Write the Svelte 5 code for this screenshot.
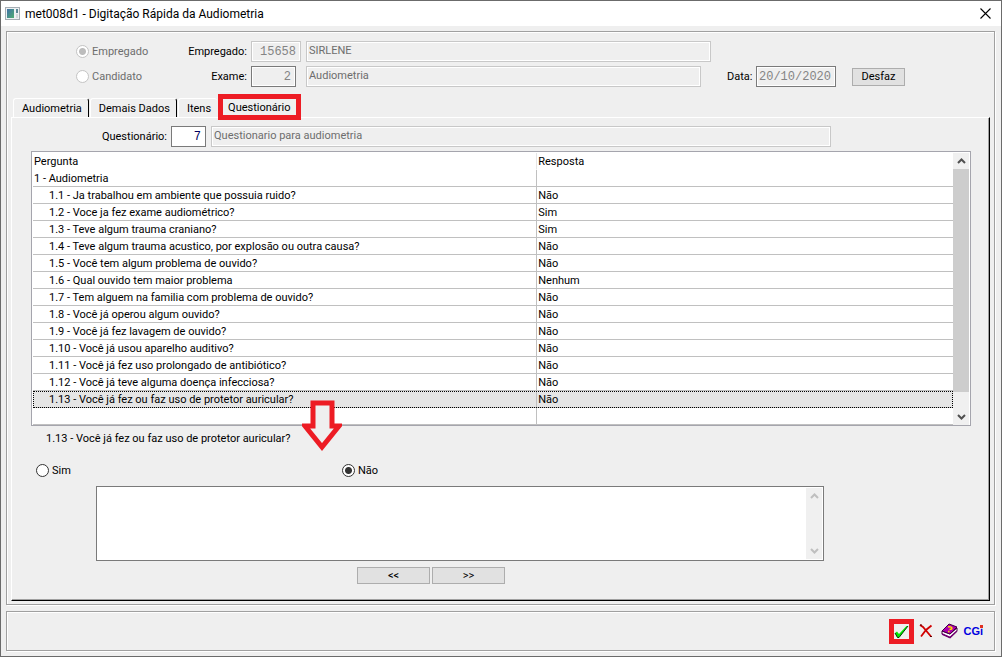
<script>
  const tabs = ["Audiometria", "Demais Dados", "Itens", "Questionário"];
  let activeTab = "Questionário";

  let questions = [
    { text: "1 - Audiometria", answer: "", group: true },
    { text: "1.1 - Ja trabalhou em ambiente que possuia ruido?", answer: "Não" },
    { text: "1.2 - Voce ja fez exame audiométrico?", answer: "Sim" },
    { text: "1.3 - Teve algum trauma craniano?", answer: "Sim" },
    { text: "1.4 - Teve algum trauma acustico, por explosão ou outra causa?", answer: "Não" },
    { text: "1.5 - Você tem algum problema de ouvido?", answer: "Não" },
    { text: "1.6 - Qual ouvido tem maior problema", answer: "Nenhum" },
    { text: "1.7 - Tem alguem na familia com problema de ouvido?", answer: "Não" },
    { text: "1.8 - Você já operou algum ouvido?", answer: "Não" },
    { text: "1.9 - Você já fez lavagem de ouvido?", answer: "Não" },
    { text: "1.10 - Você já usou aparelho auditivo?", answer: "Não" },
    { text: "1.11 - Você já fez uso prolongado de antibiótico?", answer: "Não" },
    { text: "1.12 - Você já teve alguma doença infecciosa?", answer: "Não" },
    { text: "1.13 - Você já fez ou faz uso de protetor auricular?", answer: "Não" },
  ];
  let selected = 13;

  function move(step) {
    selected = Math.min(questions.length - 1, Math.max(1, selected + step));
  }
</script>

<div class="window">
  <header class="titlebar">
    <svg class="app-icon" width="15" height="13" viewBox="0 0 15 13" aria-hidden="true">
      <defs>
        <linearGradient id="pane" x1="0" y1="0" x2="1" y2="1">
          <stop offset="0" stop-color="#3f6fa8" />
          <stop offset="1" stop-color="#4fae72" />
        </linearGradient>
      </defs>
      <rect x="0.5" y="0.5" width="14" height="12" fill="#eef1f3" stroke="#a5adb3" />
      <rect x="2" y="2" width="7" height="9" fill="url(#pane)" />
      <rect x="11" y="2" width="2" height="4" fill="#5c8796" />
      <rect x="11" y="7" width="2" height="4" fill="#d5dadd" />
    </svg>
    <h1>met008d1 - Digitação Rápida da Audiometria</h1>
    <button class="close" aria-label="Fechar">
      <svg width="11" height="11" viewBox="0 0 11 11"><path d="M0.5 0.5L10.5 10.5M10.5 0.5L0.5 10.5" stroke="#000" stroke-width="1.1" /></svg>
    </button>
  </header>

  <main class="groove content">
    <div class="person">
      <div class="row">
        <label class="kind"><input type="radio" name="kind" checked disabled />Empregado</label>
        <label class="caption" for="employee">Empregado:</label>
        <input id="employee" class="code number" value="15658" disabled />
        <input class="name name-employee" aria-label="Nome do empregado" value="SIRLENE" disabled />
      </div>
      <div class="row">
        <label class="kind"><input type="radio" name="kind" disabled />Candidato</label>
        <label class="caption" for="exam">Exame:</label>
        <input id="exam" class="code code-short number strong" value="2" disabled />
        <input class="name" aria-label="Nome do exame" value="Audiometria" disabled />
        <label class="date-caption" for="date">Data:</label>
        <input id="date" class="date strong" value="20/10/2020" disabled />
        <button class="push undo">Desfaz</button>
      </div>
    </div>

    <div class="tabs" role="tablist">
      {#each tabs as tab}
        <button role="tab" class="tab" class:active={tab === activeTab} aria-selected={tab === activeTab} on:click={() => (activeTab = tab)}>{tab}</button>
      {/each}
    </div>

    <section class="page" role="tabpanel">
      <div class="row quiz">
        <label class="quiz-caption" for="quiz">Questionário:</label>
        <input id="quiz" class="quiz-code number strong" value="7" />
        <input class="name name-quiz" aria-label="Nome do questionário" value="Questionario para audiometria" disabled />
      </div>

      <div class="list">
        <table>
          <thead>
            <tr><th class="question">Pergunta</th><th>Resposta</th></tr>
          </thead>
          <tbody>
            {#each questions as question, i}
              <tr class:selected={i === selected} on:click={() => (selected = i)}>
                <td class:indent={!question.group}>{question.text}</td>
                <td>{question.answer}</td>
              </tr>
            {/each}
            <tr><td></td><td></td></tr>
          </tbody>
        </table>
        <div class="scrollbar">
          <button aria-label="Rolar para cima"><svg width="9" height="6" viewBox="0 0 9 6"><path d="M1 5L4.500 1.500L8 5" /></svg></button>
          <div class="thumb"></div>
          <button aria-label="Rolar para baixo"><svg width="9" height="6" viewBox="0 0 9 6"><path d="M1 1L4.500 4.500L8 1" /></svg></button>
        </div>
      </div>

      <div class="answer">
        <p>{questions[selected].text}</p>
        <svg class="arrow" width="40" height="51" viewBox="0 0 40 51" aria-hidden="true">
          <path d="M11 3H30V26H37L20 47L3 26H11Z" fill="#efefef" stroke="#ed1c24" stroke-width="5" />
        </svg>
        <div class="options">
          <label><input type="radio" name="answer" value="Sim" bind:group={questions[selected].answer} />Sim</label>
          <label><input type="radio" name="answer" value="Não" bind:group={questions[selected].answer} />Não</label>
        </div>
      </div>

      <div class="notes">
        <textarea aria-label="Observações"></textarea>
        <div class="scrollbar idle">
          <button aria-label="Rolar para cima" disabled><svg width="9" height="6" viewBox="0 0 9 6"><path d="M1 5L4.500 1.500L8 5" /></svg></button>
          <button aria-label="Rolar para baixo" disabled><svg width="9" height="6" viewBox="0 0 9 6"><path d="M1 1L4.500 4.500L8 1" /></svg></button>
        </div>
      </div>

      <div class="steps">
        <button class="push" on:click={() => move(-1)}>&lt;&lt;</button>
        <button class="push" on:click={() => move(1)}>&gt;&gt;</button>
      </div>
    </section>
  </main>

  <footer class="groove actions">
    <button class="confirm" aria-label="Confirmar">
      <svg width="15" height="15" viewBox="0 0 15 15">
        <path d="M1 9L3 7.500L5 10L12.500 2H14L5 13.500H3.500Z" fill="#00e800" />
        <path d="M1 9L3.500 13.500H5L14 2" fill="none" stroke="#003800" stroke-width="1" />
      </svg>
    </button>
    <button aria-label="Cancelar">
      <svg width="14" height="14" viewBox="0 0 14 14">
        <path d="M1 1L4 3L12 12.500M12.500 1.500L7 6L2 12.500" stroke="#d00000" stroke-width="1.800" fill="none" />
        <path d="M1 1H3M11 12.500H13" stroke="#600000" />
      </svg>
    </button>
    <button class="help" aria-label="Ajuda">
      <svg width="17" height="16" viewBox="0 0 17 16">
        <path d="M1 8L9 11L16 5V8L9 14.500L1 11Z" fill="#fff" stroke="#400040" />
        <path d="M1 8L8 1L16 4L9 11Z" fill="#b000b0" stroke="#400040" />
        <path d="M1 11L9 14.500L16 8" fill="none" stroke="#700070" stroke-width="1.500" />
        <path d="M7 4Q10 3 11 5Q11 6.500 8.500 6.500M7 8.500H8.500" fill="none" stroke="#ffe000" stroke-width="1.400" />
      </svg>
    </button>
    <button class="brand" aria-label="CGI">CGi</button>
  </footer>
</div>

<style>
  :global(body) {
    margin: 0;
  }

  .window {
    box-sizing: border-box;
    min-height: 100vh;
    display: flex;
    flex-direction: column;
    border: 1px solid #6b6b6b;
    background: #efefef;
    color: #000;
    font: 11px/17px Roboto, "Liberation Sans", sans-serif;
  }

  .window * {
    box-sizing: border-box;
  }

  button,
  input,
  textarea {
    margin: 0;
    padding: 0;
    font: inherit;
    color: inherit;
  }

  button {
    border: none;
    background: none;
  }

  .titlebar {
    height: 25px;
    display: flex;
    align-items: center;
    padding: 0 10px 0 4px;
    background: #fff;
  }

  h1 {
    flex: 1;
    margin: 0 0 0 5px;
    font: 12px/16px Roboto, "Open Sans", sans-serif;
  }

  .close {
    display: flex;
  }

  .groove {
    border: 1px solid #a0a0a0;
    box-shadow: inset 1px 1px #fff, 1px 1px #fff;
  }

  .content {
    flex: 1;
    display: flex;
    flex-direction: column;
    margin: 5px 6px 0 5px;
    padding: 9px 4px 3px;
  }

  .row {
    display: flex;
    align-items: center;
  }

  .person {
    display: flex;
    flex-direction: column;
    gap: 4px;
    padding: 0 85px 0 65px;
  }

  .kind {
    display: flex;
    align-items: center;
    gap: 3px;
    width: 90px;
    color: #6d6d6d;
  }

  .caption {
    width: 81px;
    text-align: right;
  }

  input[type="radio"] {
    appearance: none;
    width: 13px;
    height: 13px;
    border: 1px solid #333;
    border-radius: 50%;
    background: #fff;
  }

  input[type="radio"]:checked {
    background: radial-gradient(circle, #333 3px, #fff 4px);
  }

  input[type="radio"]:disabled {
    border-color: #c4c4c4;
  }

  input[type="radio"]:disabled:checked {
    background: radial-gradient(circle, #bcbcbc 3px, #fff 4px);
  }

  input:not([type="radio"]) {
    height: 21px;
    min-width: 0;
    padding: 0 2px 2px;
    border: 1px solid #c8c8c8;
    box-shadow: inset 0 0 0 1px #fff;
    background: #efefef;
    color: #6d6d6d;
  }

  input.strong:not([type="radio"]) {
    border-color: #7a7a7a;
  }

  input.number:not([type="radio"]),
  input.date:not([type="radio"]) {
    padding: 0 4px 0 2px;
    font-family: "Liberation Mono", "Courier New", monospace;
    font-size: 12px;
    color: #848484;
  }

  .number {
    text-align: right;
  }

  .code {
    width: 50px;
    margin: 0 5px 0 4px;
  }

  .code-short {
    width: 45px;
    margin-right: 10px;
  }

  .name {
    flex: 1;
  }

  .name-employee {
    margin-right: 194px;
  }

  .date-caption {
    width: 26px;
    margin-left: 26px;
  }

  .date {
    width: 80px;
    margin-left: 3px;
  }

  .push {
    border: 1px solid #adadad;
    background: #e1e1e1;
  }

  .undo {
    width: 53px;
    height: 18px;
    margin-left: 16px;
    line-height: 16px;
  }

  .tabs {
    display: flex;
    margin: 11px 0 0 2px;
  }

  .tab {
    position: relative;
    height: 19px;
    margin-right: 1px;
    padding: 0 6px 0 8px;
    border-top: 1px solid #fff;
    border-left: 1px solid #fff;
    border-right: 1px solid #000;
    border-radius: 3px 3px 0 0;
  }

  .tab:nth-last-child(2) {
    border-right: none;
  }

  .tab.active {
    border: none;
    padding: 0 10px;
  }

  .tab.active::after {
    content: "";
    position: absolute;
    inset: -4px 0 -3px 0;
    border: 5px solid #ed1c24;
  }

  .page {
    flex: 1;
    padding: 8px 18px 14px 19px;
    border: 1px solid;
    border-color: #fff #000 #000 #fff;
    box-shadow: inset -1px -1px #a0a0a0;
  }

  .quiz {
    padding: 0 140px 0 70px;
  }

  .quiz-caption {
    width: 66px;
    text-align: right;
    white-space: nowrap;
  }

  .quiz-code {
    width: 35px;
    margin: 0 5px 0 4px;
  }

  input.quiz-code:not([type="radio"]) {
    background: #fff;
    color: #000060;
  }

  .list {
    display: flex;
    margin-top: 4px;
    padding: 1px 1px 0;
    border: 1px solid #a5a5ad;
    background: #fff;
  }

  table {
    flex: 1;
    table-layout: fixed;
    border-spacing: 0;
    border-collapse: separate;
  }

  th,
  td {
    height: 17px;
    padding: 1px 2px 0 1px;
    font-weight: normal;
    text-align: left;
    line-height: 15px;
    white-space: nowrap;
    border-bottom: 1px solid #c0c0c0;
  }

  th {
    border-bottom-color: #fff;
  }

  .question {
    width: 54.7%;
  }

  th + th {
    border-left: 1px solid #e5e5e5;
  }

  td + td {
    border-left: 1px solid #c0c0c0;
  }

  .indent {
    padding-left: 16px;
  }

  .selected {
    background: #e5e5e5;
    outline: 1px dotted #000;
    outline-offset: -1px;
  }

  .scrollbar {
    width: 16px;
    display: flex;
    flex-direction: column;
    justify-content: space-between;
    background: #f0f0f0;
  }

  .scrollbar button {
    height: 16px;
    display: flex;
    align-items: center;
    justify-content: center;
  }

  .scrollbar path {
    fill: none;
    stroke: #505050;
    stroke-width: 2;
  }

  .idle path {
    stroke: #bfbfbf;
  }

  .thumb {
    flex: 1;
    margin-bottom: 17px;
    background: #cdcdcd;
  }

  .answer {
    position: relative;
  }

  .answer p {
    margin: 4px 15px 15px;
  }

  .arrow {
    position: absolute;
    left: 271px;
    top: -30px;
  }

  .options {
    display: flex;
    margin-left: 5px;
  }

  .options label {
    display: flex;
    align-items: center;
    gap: 3px;
    width: 306px;
  }

  .notes {
    display: flex;
    height: 75px;
    margin: 7px 147px 0 65px;
    padding: 1px;
    border: 1px solid #7a7a7a;
    background: #fff;
  }

  textarea {
    flex: 1;
    border: none;
    resize: none;
    outline: none;
  }

  .steps {
    display: flex;
    gap: 2px;
    margin: 6px 0 0 326px;
  }

  .steps .push {
    width: 73px;
    height: 17px;
    line-height: 15px;
  }

  .actions {
    display: flex;
    align-items: center;
    justify-content: flex-end;
    gap: 5px;
    height: 40px;
    margin: 6px 6px 5px 5px;
    padding-right: 11px;
  }

  .actions button {
    display: flex;
    align-items: center;
    justify-content: center;
  }

  .actions .confirm {
    width: 25px;
    height: 25px;
    border: 5px solid #ed1c24;
  }

  .actions .help {
    margin-left: 3px;
  }

  .actions .brand {
    position: relative;
    font: bold 11px/14px "Liberation Sans", Arial, sans-serif;
    color: #0000e0;
  }

  .brand::after {
    content: "";
    position: absolute;
    top: 1px;
    right: 0;
    width: 3px;
    height: 3px;
    background: #e03020;
  }
</style>
